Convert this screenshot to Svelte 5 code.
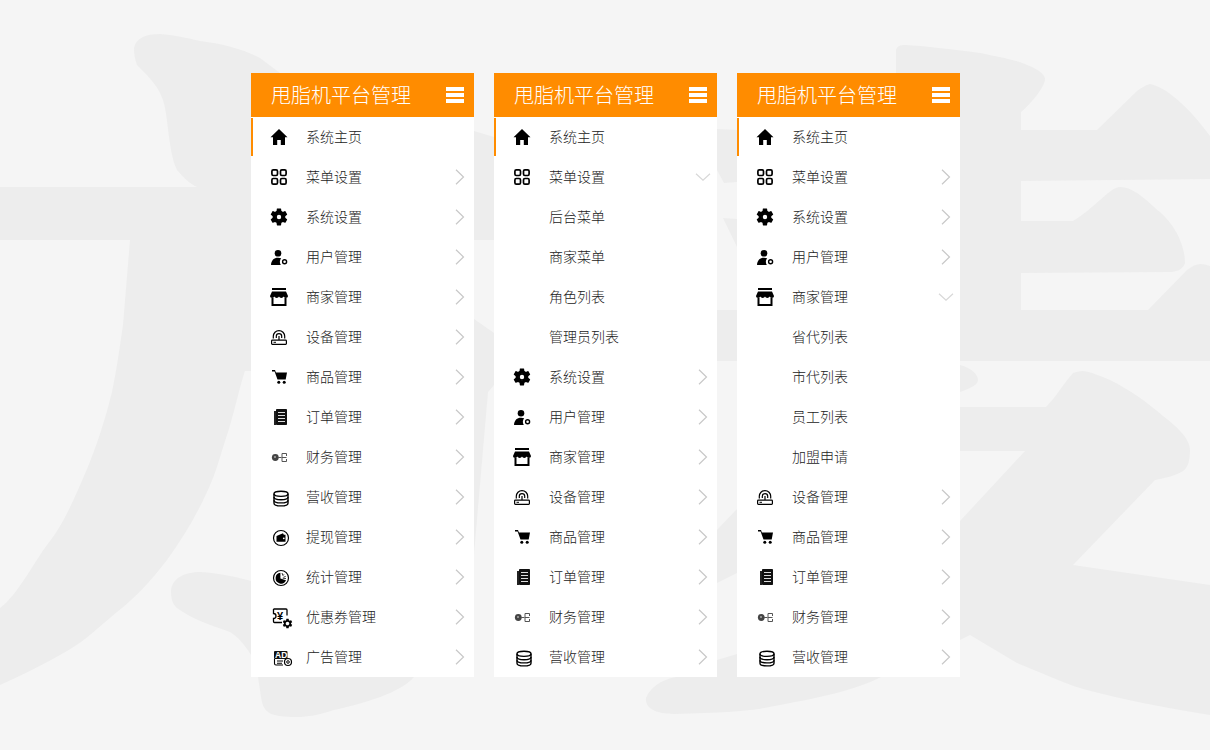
<script>
	const head = { label: '系统主页', icon: 'home', active: true };
	const all = [
		{ label: '菜单设置', icon: 'grid' },
		{ label: '系统设置', icon: 'gear' },
		{ label: '用户管理', icon: 'user' },
		{ label: '商家管理', icon: 'store' },
		{ label: '设备管理', icon: 'router' },
		{ label: '商品管理', icon: 'cart' },
		{ label: '订单管理', icon: 'book' },
		{ label: '财务管理', icon: 'finance' },
		{ label: '营收管理', icon: 'db' },
		{ label: '提现管理', icon: 'wallet' },
		{ label: '统计管理', icon: 'pie' },
		{ label: '优惠券管理', icon: 'coupon' },
		{ label: '广告管理', icon: 'ad' }
	];

	const subs = (names) => names.map((label) => ({ label, sub: true }));
	const open = (item) => ({ ...item, open: true });

	const panels = [
		[head, ...all],
		[
			head,
			open(all[0]),
			...subs(['后台菜单', '商家菜单', '角色列表', '管理员列表']),
			...all.slice(1, 9)
		],
		[
			head,
			...all.slice(0, 3),
			open(all[3]),
			...subs(['省代列表', '市代列表', '员工列表', '加盟申请']),
			...all.slice(4, 9)
		]
	];

	const gearPath =
		'M19.14 12.94c.04-.3.06-.61.06-.94 0-.32-.02-.64-.07-.94l2.03-1.58a.49.49 0 0 0 .12-.61l-1.92-3.32a.488.488 0 0 0-.59-.22l-2.39.96c-.5-.38-1.03-.7-1.62-.94l-.36-2.54a.484.484 0 0 0-.48-.41h-3.84c-.24 0-.43.17-.47.41l-.36 2.54c-.59.24-1.13.57-1.62.94l-2.39-.96c-.22-.08-.47 0-.59.22L2.74 8.87c-.12.21-.08.47.12.61l2.03 1.58c-.05.3-.09.63-.09.94s.02.64.07.94l-2.03 1.58a.49.49 0 0 0-.12.61l1.92 3.32c.12.22.37.29.59.22l2.39-.96c.5.38 1.03.7 1.62.94l.36 2.54c.05.24.24.41.48.41h3.84c.24 0 .44-.17.47-.41l.36-2.54c.59-.24 1.13-.56 1.62-.94l2.39.96c.22.08.47 0 .59-.22l1.92-3.32c.12-.22.07-.47-.12-.61l-2.01-1.58zM12 15.6c-1.98 0-3.6-1.62-3.6-3.6s1.62-3.6 3.6-3.6 3.6 1.62 3.6 3.6-1.62 3.6-3.6 3.6z';
</script>

{#snippet icon(name)}
	<svg class="icon" width="24" height="24" viewBox="0 0 24 24">
		{#if name === 'home'}
			<path d="M12 4 20.5 12.2H18V20h-4.2v-5h-3.6v5H6v-7.8H3.5z" />
		{:else if name === 'grid'}
			<g fill="none" stroke="#000" stroke-width="1.7">
				<rect x="4.9" y="4.9" width="5.6" height="5.6" rx="1.4" />
				<rect x="13.5" y="4.9" width="5.6" height="5.6" rx="1.4" />
				<rect x="4.9" y="13.5" width="5.6" height="5.6" rx="1.4" />
				<rect x="13.5" y="13.5" width="5.6" height="5.6" rx="1.4" />
			</g>
		{:else if name === 'gear'}
			<path fill-rule="evenodd" transform="translate(1.4 1.4) scale(.88)" d={gearPath} />
			<circle cx="12" cy="12" r="3" fill="none" stroke="#000" stroke-width="1.6" />
		{:else if name === 'user'}
			<circle cx="11" cy="8.3" r="3.3" />
			<path d="M4 20c.2-4.8 3-7.3 7-7.3 1.2 0 2.2.2 3.2.6-1.6 1.8-1.8 4.6-.4 6.7z" />
			<circle cx="17.6" cy="16.8" r="2" fill="none" stroke="#000" stroke-width="1.4" />
		{:else if name === 'store'}
			<rect x="5" y="3" width="14" height="2" />
			<path d="M5 6.5h14l2 4.5c0 1.2-1 2-2.2 2-1 0-1.9-.6-2.2-1.4-.3.8-1.3 1.4-2.3 1.4s-1.9-.6-2.3-1.4c-.4.8-1.3 1.4-2.3 1.4s-2-.6-2.3-1.4c-.3.8-1.2 1.4-2.2 1.4C4 13 3 12.2 3 11z" />
			<path d="M5.5 13v7h13v-7" fill="none" stroke="#000" stroke-width="2" />
		{:else if name === 'router'}
			<g fill="none" stroke="#000" stroke-width="1.2">
				<rect x="4.6" y="15.1" width="14.8" height="4.3" rx=".8" />
				<path d="M6.3 13.5V11.3a5.7 5.7 0 0 1 11.400 0v2.200" />
				<path d="M9.300 13v-1.700a2.700 2.700 0 0 1 5.400 0V13" />
				<path d="M12 11v4" />
			</g>
			<rect x="6.500" y="16.800" width="2.500" height="1" />
		{:else if name === 'cart'}
			<path d="M5 5h3l.9 2.600H20l-1.300 7H10.500L7.600 6.500H5z" />
			<circle cx="11.800" cy="17.300" r="1.500" />
			<circle cx="17.200" cy="17.300" r="1.500" />
		{:else if name === 'book'}
			<rect x="7" y="6" width="2" height="14" fill="#222" />
			<rect x="9" y="4" width="11" height="16" rx=".8" fill="#111" />
			<path d="M11 7.500h7M11 10.500h7M11 13.500h7M11 16.500h7" stroke="#ddd" stroke-width="1" />
		{:else if name === 'finance'}
			<circle cx="8.300" cy="12.500" r="3.400" fill="#444" />
			<circle cx="8" cy="12" r="1" fill="#aaa" />
			<path d="M11 12.500h3.500M15 8.500v8M15 8.500h4.500M15 12.500h4.500M15 16.500h4.500M19.500 8.500v2.500M19.500 14v2.500" fill="none" stroke="#555" stroke-width="1" />
		{:else if name === 'db'}
			<g fill="none" stroke="#000" stroke-width="1.400">
				<ellipse cx="14" cy="8.800" rx="7" ry="2.600" />
				<path d="M7 8.800v9.400c0 1.500 3.100 2.700 7 2.700s7-1.200 7-2.700V8.800" />
				<path d="M7 12c0 1.500 3.100 2.700 7 2.700s7-1.200 7-2.700M7 15.200c0 1.500 3.100 2.700 7 2.700s7-1.200 7-2.700" />
			</g>
		{:else if name === 'wallet'}
			<circle cx="14" cy="13" r="7.500" fill="none" stroke="#000" stroke-width="1.200" />
			<path d="M9.500 11l6.500-2.800.8 1.600h1.700v7H9.500z" />
			<circle cx="16.800" cy="13.300" r=".9" fill="#fff" />
		{:else if name === 'pie'}
			<circle cx="14" cy="13" r="7.500" fill="none" stroke="#000" stroke-width="1.200" />
			<path d="M13.400 7.800a5.400 5.400 0 1 0 5.600 7.400l-5.600-1.800z" />
			<path d="M15 8l.8 2.200M17 9.300l-1.200 1.500M18.700 11.400l-2.300.9M19 13.600l-3.300-.4" fill="none" stroke="#222" stroke-width=".9" />
		{:else if name === 'coupon'}
			<path d="M6.500 4h12.500a1 1 0 0 1 1 1v5.500M15 17.500H7.500a1 1 0 0 1-1-1v-3a2.500 2.500 0 0 0 0-5V4" fill="none" stroke="#000" stroke-width="1.300" />
			<text x="10" y="14.800" class="yen">¥</text>
			<path fill-rule="evenodd" transform="translate(14.500 12.500) scale(.5)" d={gearPath} />
		{:else if name === 'ad'}
			<rect x="7" y="6" width="13.500" height="8" rx="1" fill="#111" />
			<text x="8" y="13" class="ad">AD</text>
			<path d="M7.500 14v4.500a1.500 1.500 0 0 0 1.500 1.500h7M10 16h6M10 18.200h5" fill="none" stroke="#000" stroke-width="1.100" />
			<circle cx="21" cy="17" r="3.500" fill="#fff" stroke="#000" stroke-width="1.200" />
			<circle cx="21" cy="17" r="1.300" fill="none" stroke="#000" stroke-width="1" />
		{/if}
	</svg>
{/snippet}

<div class="page">
	<svg class="backdrop" width="1210" height="750" viewBox="0 0 1210 750" aria-hidden="true">
		<path d="M134 48C136 38 146 34 160 34C172 35 188 38 200 41C225 44 245 50 260 58L280 73L474 131L494 137L560 200L494 240H260L300 371H245C240 385 233 418 227 435C222 450 218 465 213 478C200 510 185 535 167 560C150 582 135 598 117 612C100 626 85 641 67 651C45 664 20 676 0 685V608C18 595 35 560 50 541C65 522 78 490 87 469C97 445 105 420 112 392C117 368 120 345 123 325L130 240H0V187H197C190 184 183 177 177 170C172 160 170 145 168 129C166 112 165 103 160 93C155 83 147 75 137 65C135 60 134 54 134 48Z" />
		<path d="M474 319L494 333V385L488 392L474 554L460 600H300V319Z" />
		<path d="M171 591C172 578 185 572 200 572C220 573 240 578 251 581L300 590L440 660L414 677C400 693 365 703 334 710C318 715 308 717 297 717C285 717 272 716 268 712C263 708 262 703 261 697L258 677L251 655C245 645 238 637 230 632C210 625 190 618 177 608C172 604 171 597 171 591Z" />
		<path d="M717 129L737 130V182L724 183L717 170Z" />
		<path d="M723 218L737 219V247Z" />
		<path d="M717 310H737V361H717Z" />
		<path d="M717 530L737 509V573L717 583Z" />
		<path d="M717 660L737 654V677H717Z" />
		<path d="M676 677C660 680 650 688 646 698C645 708 655 714 674 714C720 713 745 711 759 709C775 706 790 703 806 700C830 695 860 688 881 677Z" />
		<path d="M896 73L896 50C897 46 900 45 905 45C925 46 950 49 980 53C1000 57 1020 61 1027 65C1040 70 1045 75 1045 79C1045 87 1030 105 1021 112V130H1097L1137 91C1143 87 1146 85 1150 84C1170 88 1195 115 1210 136V179L1021 181V221H1073C1095 208 1110 187 1120 187C1135 187 1150 204 1160 212C1175 225 1185 245 1185 263C1183 270 1175 272 1170 272L1021 273V310H1148L1187 270C1195 264 1200 262 1210 266V361H940V73Z" />
		<path d="M950 360L960 365C972 368 978 375 978 380C978 386 965 390 960 392H950Z" />
		<path d="M940 407H1046C1055 398 1065 382 1073 373C1076 372 1080 371 1083 371C1092 372 1100 376 1110 380C1130 390 1147 402 1163 416C1175 425 1190 438 1190 450C1190 460 1188 468 1183 471C1175 476 1165 478 1155 480L1073 565L1210 585V715C1165 708 1125 700 1083 689C1060 682 1040 672 1017 663L970 635L960 640H940V521H960L1025 451H940Z" />
	</svg>

	{#each panels as items}
		<nav class="panel">
			<header>
				<h1>甩脂机平台管理</h1>
				<div class="burger">
					<span></span>
					<span></span>
					<span></span>
				</div>
			</header>
			<ul>
				{#each items as item}
					<li class:active={item.active}>
						<span class="icon-box">
							{#if item.icon}
								{@render icon(item.icon)}
							{/if}
						</span>
						<span class="label">{item.label}</span>
						{#if item.open}
							<svg class="chev-down" width="16" height="8" viewBox="0 0 16 8">
								<path d="M1 .7 8 7.200 15 .7" />
							</svg>
						{:else if !item.sub && !item.active}
							<svg class="chev-right" width="10" height="16" viewBox="0 0 10 16">
								<path d="M1 .7 8.500 8 1 15.300" />
							</svg>
						{/if}
					</li>
				{/each}
			</ul>
		</nav>
	{/each}
</div>

<style>
	:global(body) {
		margin: 0;
		background: #f5f5f5;
	}

	.page {
		position: relative;
		box-sizing: border-box;
		height: 750px;
		overflow: hidden;
		display: flex;
		justify-content: center;
		align-items: flex-start;
		gap: 20px;
		padding: 73px 0 0 1px;
		font-family: 'Noto Sans CJK SC', 'Noto Sans', sans-serif;
	}

	.backdrop {
		position: absolute;
		left: 0;
		top: 0;
		fill: #ededed;
	}

	.panel {
		position: relative;
		width: 223px;
		background: #fff;
	}

	header {
		height: 44px;
		display: flex;
		align-items: center;
		justify-content: space-between;
		padding: 0 10px 0 20px;
		background: #ff8c00;
		color: #fff;
	}

	h1 {
		margin: 0;
		font-size: 20px;
		font-weight: 300;
		line-height: 44px;
	}

	.burger {
		display: flex;
		flex-direction: column;
		gap: 2px;
		width: 18px;
	}

	.burger span {
		height: 4px;
		background: #fff;
	}

	ul {
		margin: 0;
		padding: 0;
		list-style: none;
	}

	li {
		position: relative;
		height: 40px;
		display: flex;
		align-items: center;
		padding-left: 16px;
		font-size: 14px;
		font-weight: 300;
		color: #222;
	}

	li.active::before {
		content: '';
		position: absolute;
		left: 0;
		top: 1px;
		bottom: 1px;
		width: 2px;
		background: #ff8c00;
	}

	.icon-box {
		width: 24px;
		height: 24px;
		margin-right: 15px;
		flex: none;
	}

	.icon {
		display: block;
		overflow: visible;
		fill: #000;
	}

	.label {
		flex: 1;
		margin-bottom: 2px;
	}

	.chev-right,
	.chev-down {
		fill: none;
		stroke-width: 1.2;
	}

	.chev-right {
		margin-right: 9px;
		stroke: #c8c8c8;
	}

	.chev-down {
		margin-right: 6px;
		stroke: #d8d8d8;
	}

	.yen {
		font-family: 'Liberation Sans', sans-serif;
		font-size: 11px;
		font-weight: 700;
	}

	.ad {
		font-family: 'Liberation Sans', sans-serif;
		font-size: 8.500px;
		font-weight: 700;
		fill: #fff;
	}
</style>
